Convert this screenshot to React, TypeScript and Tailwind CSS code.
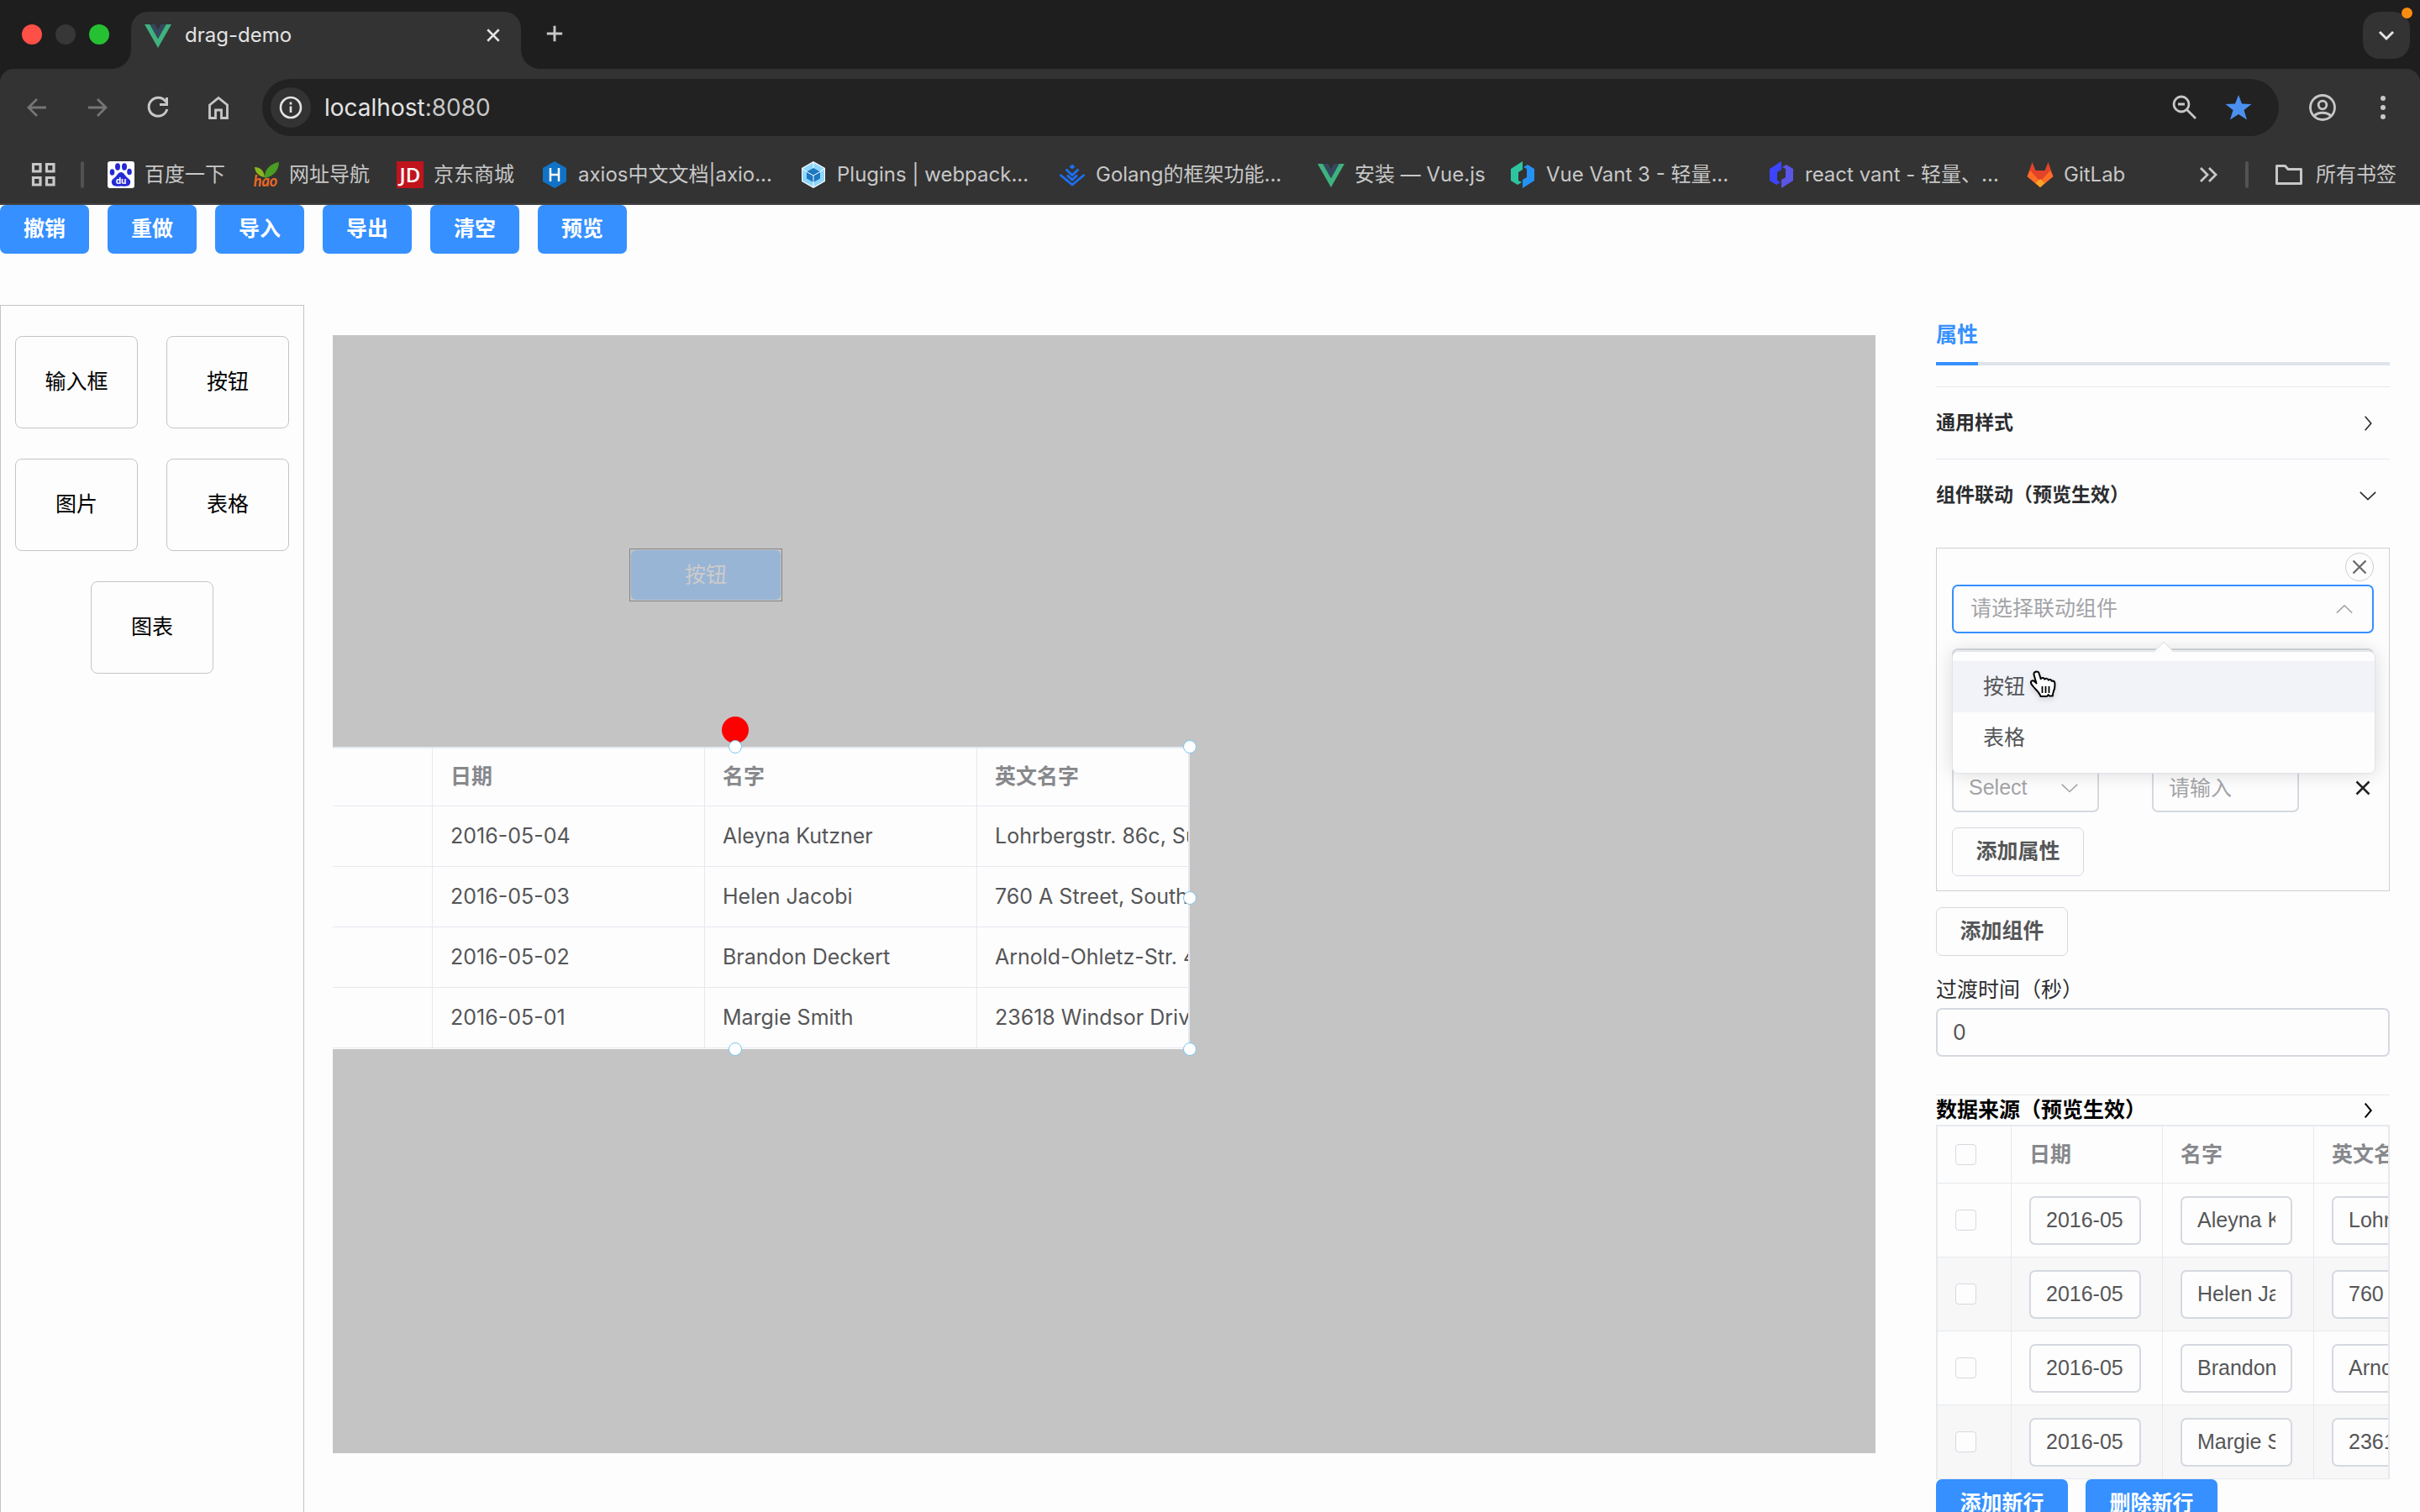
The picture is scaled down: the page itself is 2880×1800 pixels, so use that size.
import type { ReactNode } from "react";
import clsx from "clsx";

const bookmarks = [
  { name: "百度一下", icon: <BaiduIcon />, width: "w-24" },
  { name: "网址导航", icon: <HaoIcon />, width: "w-24" },
  { name: "京东商城", icon: <JdIcon />, width: "w-24" },
  { name: "axios中文文档|axio...", icon: <AxiosIcon />, width: "w-[232px]" },
  { name: "Plugins | webpack...", icon: <WebpackIcon />, width: "w-[232px]" },
  { name: "Golang的框架功能...", icon: <GolangIcon />, width: "w-[232px]" },
  { name: "安装 — Vue.js", icon: <VueIcon />, width: "w-[152px]" },
  { name: "Vue Vant 3 - 轻量...", icon: <VantIcon left="#2fc4a0" right="#2492f5" />, width: "w-[232px]" },
  { name: "react vant - 轻量、...", icon: <VantIcon left="#3d43ff" right="#5b55e8" />, width: "w-[232px]" },
  { name: "GitLab", icon: <GitlabIcon />, width: "w-20" },
];

const toolbar = ["撤销", "重做", "导入", "导出", "清空", "预览"];

const materials = ["输入框", "按钮", "图片", "表格", "图表"];

const rows = [
  { date: "2016-05-04", name: "Aleyna Kutzner", address: "Lohrbergstr. 86c, Süd Lilli" },
  { date: "2016-05-03", name: "Helen Jacobi", address: "760 A Street, South Frankfield" },
  { date: "2016-05-02", name: "Brandon Deckert", address: "Arnold-Ohletz-Str. 41a" },
  { date: "2016-05-01", name: "Margie Smith", address: "23618 Windsor Drive" },
];

const handles = [
  "left-1/2 top-0",
  "left-full top-0",
  "left-full top-1/2",
  "left-full top-full",
  "left-1/2 top-full",
  "left-0 top-0",
  "left-0 top-1/2",
  "left-0 top-full",
];

function VueIcon() {
  return (
    <svg viewBox="0 0 32 32" className="size-8">
      <path d="M0 3h6.4L16 20 25.600 3H32L16 31z" fill="#3fb27f" />
      <path d="M6.400 3h6L16 9.600 19.600 3h6L16 20z" fill="#35495e" />
    </svg>
  );
}

function BaiduIcon() {
  return (
    <svg viewBox="0 0 32 32" className="size-8">
      <rect width="32" height="32" rx="3" fill="#fff" />
      <g fill="#2429d6">
        <ellipse cx="12" cy="6.500" rx="3" ry="4.200" />
        <ellipse cx="20" cy="6.500" rx="3" ry="4.200" />
        <ellipse cx="5.500" cy="13" rx="2.800" ry="3.800" />
        <ellipse cx="26" cy="12.500" rx="2.800" ry="3.800" />
        <path d="M16 13c3 0 4 3 6.500 5.500S28 22 27 26s-5 4-11 3.500C10 30 6 30 5 26s2-5 4.500-7.500S13 13 16 13z" />
      </g>
      <text x="16" y="27" textAnchor="middle" fontSize="10" fontWeight="700" fontFamily="Inter, sans-serif" fill="#fff">
        du
      </text>
    </svg>
  );
}

function HaoIcon() {
  return (
    <svg viewBox="0 0 32 32" className="size-8">
      <path d="M32 1c0 9-6 17-17 19C14 12 20 3 32 1z" fill="#4a9c22" />
      <path d="M3 7c7 0 11 4 12 12C8 18 4 14 3 7z" fill="#8db51c" />
      <text x="16" y="30" textAnchor="middle" fontSize="18" fontStyle="italic" fontWeight="700" fontFamily="Lato, sans-serif" fill="#ec6a24">
        hao
      </text>
    </svg>
  );
}

function JdIcon() {
  return (
    <svg viewBox="0 0 32 32" className="size-8">
      <rect width="32" height="32" fill="#c1131c" />
      <text x="16" y="25" textAnchor="middle" fontSize="24" fontWeight="600" fontFamily="'Open Sans', sans-serif" fill="#fff">
        JD
      </text>
    </svg>
  );
}

function AxiosIcon() {
  return (
    <svg viewBox="0 0 32 32" className="size-8">
      <path d="M16 0l14 8v16l-14 8L2 24V8z" fill="#1173c7" />
      <path d="M11 8v16M21 8v16M11 16h10" stroke="#fff" strokeWidth="2.500" fill="none" />
    </svg>
  );
}

function WebpackIcon() {
  return (
    <svg viewBox="0 0 32 32" className="size-8">
      <path d="M16 0l14 8v16l-14 8L2 24V8z" fill="#fff" />
      <path d="M16 1.500l13 7.200v14.600l-13 7.200-13-7.200V8.700z" fill="#8ed6fb" />
      <path d="M16 8l8 4.500v8L16 25l-8-4.500v-8z" fill="#1c78c0" />
      <path d="M3 8.700l5 3.800M29 8.700l-5 3.800M16 25v6M8 12.500l8 4.500 8-4.500M16 17v8M16 2v6" stroke="#fff" strokeWidth="1" fill="none" />
    </svg>
  );
}

function GolangIcon() {
  return (
    <svg viewBox="0 0 32 32" className="size-8">
      <path d="M16 3.500l3.500 3-3.500 3-3.500-3z" fill="#1d6ff2" />
      <path d="M8.500 9.500L16 16.500l7.500-7M1.500 16L16 28l14.500-12M10 16.500l6 5.500 6-5.500" stroke="#1d6ff2" strokeWidth="2.800" fill="none" />
    </svg>
  );
}

function VantIcon({ left, right }: { left: string; right: string }) {
  return (
    <svg viewBox="0 0 32 32" className="size-8">
      <path d="M16 0v10l-5 3v10l4 2-5 3-8-5V9z" fill={left} />
      <path d="M16 32V22l5-3V9l-4-2 5-3 8 5v14z" fill={right} />
    </svg>
  );
}

function GitlabIcon() {
  return (
    <svg viewBox="0 0 32 32" className="size-8">
      <path d="M6.500 1l4 10h11l4-10L31.500 18 16 31 .5 18z" fill="#e24329" />
      <path d="M4 11L.5 18 16 31 31.500 18 28 11l-12 13z" fill="#fc6d26" />
      <path d="M16 31l-5.500-5 5.500-5 5.500 5z" fill="#fca326" />
    </svg>
  );
}

function Stroke({ d, size, width = 2, className }: { d: string; size: string; width?: number; className?: string }) {
  return (
    <svg viewBox="0 0 24 24" fill="none" stroke="currentColor" strokeWidth={width} className={clsx(size, "shrink-0", className)}>
      <path d={d} />
    </svg>
  );
}

const CHEVRON_RIGHT = "M8 2l8.500 10L8 22";
const CHEVRON_DOWN = "M1 7l11 10.500L23 7";
const CHEVRON_UP = "M1 17.500L12 7l11 10.500";
const CROSS = "M3 3l18 18M21 3L3 21";

function BrowserChrome() {
  return (
    <header className="shrink-0 bg-[#1e1e1e] font-['Inter','Noto_Sans_CJK_SC',sans-serif] text-[#c7c7c7]">
      <div className="flex h-[82px] items-end">
        <div className="flex h-[82px] w-[156px] shrink-0 items-center gap-4 pl-[26px]">
          <button aria-label="Close window" className="size-6 rounded-full bg-[#ff5047]" />
          <button aria-label="Minimize window" className="size-6 rounded-full bg-[#373737]" />
          <button aria-label="Zoom window" className="size-6 rounded-full bg-[#26c033]" />
        </div>
        <div className="relative flex h-[68px] w-[464px] shrink-0 items-center rounded-t-[20px] bg-[#333] pb-3 pl-4">
          <svg viewBox="0 0 24 24" className="absolute right-full bottom-0 size-6">
            <path d="M24 0v24H0C14 24 24 14 24 0z" fill="#333" />
          </svg>
          <svg viewBox="0 0 24 24" className="absolute bottom-0 left-full size-6">
            <path d="M0 0v24h24C10 24 0 14 0 0z" fill="#333" />
          </svg>
          <VueIcon />
          <span className="ml-4 text-2xl text-[#e3e3e3]">drag-demo</span>
          <button aria-label="Close tab" className="mr-6 ml-auto text-[#e3e3e3]">
            <Stroke d={CROSS} size="size-[18px]" width={3.4} />
          </button>
        </div>
        <button aria-label="New tab" className="mb-8 ml-[30px]">
          <Stroke d="M12 1v22M1 12h22" size="size-5" width={3.5} />
        </button>
        <button
          aria-label="Search tabs"
          className="relative mr-3 mb-3 ml-auto flex size-14 items-center justify-center rounded-[20px] bg-[#333] text-[#e3e3e3]"
        >
          <Stroke d="M4 8l8 8 8-8" size="size-6" width={3} />
          <span className="absolute -top-[5px] -right-[3px] size-[13px] rounded-full bg-[#f98d11]" />
        </button>
      </div>

      <div className="rounded-t-[16px] border-b-2 border-[#424242] bg-[#333]">
        <div className="flex h-[92px] items-center pr-7">
          <button aria-label="Back" className="ml-7 text-[#757575]">
            <Stroke d="M23 12H2M12 2L2 12l10 10" size="size-6" width={2.8} className="mx-1" />
          </button>
          <button aria-label="Forward" className="ml-10 text-[#757575]">
            <Stroke d="M1 12h21M12 2l10 10-10 10" size="size-6" width={2.8} className="mx-1" />
          </button>
          <button aria-label="Reload" className="ml-10">
            <svg viewBox="0 0 32 32" fill="none" stroke="currentColor" strokeWidth="3" className="size-8">
              <path d="M25.500 9.500A11 11 0 1 0 26.800 18M26.500 4v8.500H18" />
            </svg>
          </button>
          <button aria-label="Home" className="ml-10">
            <svg viewBox="0 0 32 32" fill="none" stroke="currentColor" strokeWidth="2.800" className="size-8">
              <path d="M5.500 13L16 4.500 26.500 13v15.500h-7V19h-7v9.500h-7z" />
            </svg>
          </button>
          <div className="ml-9 flex h-[68px] grow items-center rounded-full bg-[#222] pr-8 pl-[10px]">
            <button aria-label="Site information" className="flex size-12 items-center justify-center rounded-full bg-[#333] text-[#e3e3e3]">
              <svg viewBox="0 0 28 28" fill="none" stroke="currentColor" strokeWidth="2.600" className="size-7">
                <circle cx="14" cy="14" r="12" />
                <path d="M14 12.500v7.500M14 7.500v3" />
              </svg>
            </button>
            <p className="ml-4 text-[28px] text-[#c7c7c7]">
              <span className="text-[#e3e3e3]">localhost</span>:8080
            </p>
            <button aria-label="Zoom out" className="ml-auto">
              <svg viewBox="0 0 32 32" fill="none" stroke="currentColor" strokeWidth="2.800" className="size-8">
                <circle cx="12" cy="12" r="9" />
                <path d="M18.500 18.500L29 29M8 12h8" />
              </svg>
            </button>
            <button aria-label="Edit bookmark" className="ml-8 text-[#4a90f0]">
              <svg viewBox="0 0 32 32" fill="currentColor" className="size-8">
                <path d="M16 1l4 10.500 11.500.5-9 7 3.500 11.500L16 24 6 30.500 9.500 19l-9-7L12 11.500z" />
              </svg>
            </button>
          </div>
          <button aria-label="Profile" className="ml-9">
            <svg viewBox="0 0 32 32" fill="none" stroke="currentColor" strokeWidth="2.800" className="size-8">
              <circle cx="16" cy="16" r="14.500" />
              <circle cx="16" cy="13" r="4.800" />
              <path d="M6 26c5-5 15-5 20 0" />
            </svg>
          </button>
          <button aria-label="Menu" className="ml-10">
            <svg viewBox="0 0 32 32" fill="currentColor" className="size-8">
              <circle cx="16" cy="5" r="3" />
              <circle cx="16" cy="16" r="3" />
              <circle cx="16" cy="27" r="3" />
            </svg>
          </button>
        </div>

        <nav className="flex h-[68px] items-center pr-7 pl-9 text-2xl">
          <button aria-label="Apps">
            <svg viewBox="0 0 32 32" fill="none" stroke="currentColor" strokeWidth="3.200" className="size-8">
              <path d="M3.500 3.500h8.500V12H3.500zM19.500 3.500H28V12h-8.500zM3.500 19.500h8.500V28H3.500zM19.500 19.500H28V28h-8.500z" />
            </svg>
          </button>
          <span className="mr-7 ml-7 h-8 w-1 shrink-0 rounded-full bg-[#525252]" />
          <div className="flex gap-8">
            {bookmarks.map((item) => (
              <a key={item.name} href="#" className="flex shrink-0 items-center gap-3 whitespace-nowrap">
                {item.icon}
                <span className={item.width}>{item.name}</span>
              </a>
            ))}
          </div>
          <button aria-label="More bookmarks" className="ml-auto">
            <Stroke d="M3 4l8 8-8 8M13 4l8 8-8 8" size="size-6" width={2.8} />
          </button>
          <span className="mr-8 ml-8 h-8 w-1 shrink-0 rounded-full bg-[#525252]" />
          <a href="#" className="flex shrink-0 items-center gap-4">
            <svg viewBox="0 0 32 32" fill="none" stroke="currentColor" strokeWidth="3" className="size-8">
              <path d="M1.500 5.500h10l3.500 4h15.500v17h-29z" strokeLinejoin="round" />
            </svg>
            所有书签
          </a>
        </nav>
      </div>
    </header>
  );
}

function PrimaryButton({ children, className }: { children: ReactNode; className?: string }) {
  return (
    <button className={clsx("h-[58px] rounded-[7px] bg-[#3690ff] text-[25px] font-bold text-white", className)}>
      {children}
    </button>
  );
}

function PlainButton({ children }: { children: ReactNode }) {
  return (
    <button className="block h-[58px] w-[157px] rounded-[7px] border border-[#d5d9e0] text-[25px] font-bold text-[#555658]">
      {children}
    </button>
  );
}

function MaterialPanel() {
  return (
    <aside className="flex w-[362px] shrink-0 flex-wrap content-start justify-center gap-x-[34px] gap-y-9 border border-b-0 border-[#c4c4c4] pt-9">
      {materials.map((name) => (
        <button key={name} className="h-[110px] w-[146px] rounded-[8px] border border-[#c4c4c4] text-[25px] text-black">
          {name}
        </button>
      ))}
    </aside>
  );
}

function Stage() {
  return (
    <section className="relative mt-9 mr-[72px] mb-[70px] ml-[34px] grow overflow-hidden bg-[#c4c4c4]">
      {/* widgets sit freely on the stage */}
      <div className="absolute top-[254px] left-[353px] border border-[#858585] p-px">
        <button className="block h-[59px] w-[178px] rounded-[6px] bg-[#98b5d6] text-[25px] text-[#cdcbca]">按钮</button>
      </div>

      <div className="absolute top-[490px] -left-[62px] h-[360px] w-[1082px]">
        <span className="absolute -top-9 left-1/2 size-8 -translate-x-1/2 rounded-full bg-[#f00]" />
        <div className="h-full overflow-hidden border-t-2 border-r-2 border-[#e6e9f0] bg-[#fdfdfd]">
          <table className="w-[1153px] table-fixed border-separate border-spacing-0 text-left text-[25px] text-[#555658]">
            <colgroup>
              <col className="w-[181px]" />
              <col className="w-[324px]" />
              <col className="w-[324px]" />
              <col className="w-[324px]" />
            </colgroup>
            <thead className="text-[#87888c]">
              <tr className="h-[69px]">
                {["", "日期", "名字", "英文名字"].map((title, index) => (
                  <th key={index} className="border-r border-b border-[#e6e9f0] px-[21px] font-bold">
                    {title}
                  </th>
                ))}
              </tr>
            </thead>
            <tbody className="whitespace-nowrap">
              {rows.map((row) => (
                <tr key={row.date} className="h-[72px]">
                  <td className="border-r border-b border-[#e6e9f0]" />
                  <td className="border-r border-b border-[#e6e9f0] px-[21px]">{row.date}</td>
                  <td className="border-r border-b border-[#e6e9f0] px-[21px]">{row.name}</td>
                  <td className="overflow-hidden border-r border-b border-[#e6e9f0] px-[21px]">{row.address}</td>
                </tr>
              ))}
            </tbody>
          </table>
        </div>
        {handles.map((place) => (
          <span
            key={place}
            className={clsx("absolute size-4 -translate-x-1/2 -translate-y-1/2 rounded-full border border-[#7cc6ef] bg-white", place)}
          />
        ))}
      </div>
    </section>
  );
}

function HandCursor() {
  return (
    <svg viewBox="0 0 32 34" className="absolute top-[22px] left-[91px] h-[34px] w-8 drop-shadow-md">
      <path
        d="M7.500 1.800c2.200-.8 3.800.4 4.300 2.200l1.900 6.200c.6-1.800 4.200-1.600 4.600.6.9-1.600 4-1.200 4.500.9 1-1.300 3.500-.8 4 1.200 1-.9 3.200-.2 3.500 1.900.5 4 .2 7-1.400 10.200-.6 1.500-.9 3-1 5.500h-4.200l-1-1.500-1.600 2h-7.600c-1.500-5-5.500-7.500-9-12-1.500-1.600-3.500-4.500-2-6s3.500-.7 6 2.500L5.600 5.500c-.5-1.700.3-3.100 1.900-3.700z"
        fill="#fff"
        stroke="#000"
        strokeWidth="2"
        strokeLinejoin="round"
      />
      <path d="M15.500 19v8M19.500 19v8M23.500 19v8" stroke="#000" strokeWidth="1.800" />
    </svg>
  );
}

function LinkedSelect() {
  return (
    <div className="relative mt-1">
      <select
        aria-label="联动组件"
        className="h-[58px] w-full appearance-none rounded-[7px] border-2 border-[#3690ff] px-5 text-[25px] text-[#a3a4a8]"
      >
        <option>请选择联动组件</option>
      </select>
      <Stroke d={CHEVRON_UP} size="size-5" width={1.8} className="absolute top-[19px] right-[25px] text-[#a3a4a8]" />

      <div className="absolute top-[79px] -right-[2px] left-0 z-10 rounded-[7px] border border-[#e0e3ea] bg-[#fdfdfd] pt-[11px] pb-[11px] shadow-[0_0_22px_rgba(0,0,0,0.14)]">
        <span className="absolute -top-[9px] left-1/2 size-4 -translate-x-1/2 rotate-45 border-t border-l border-[#e0e3ea] bg-[#fdfdfd]" />
        <ul role="listbox" aria-label="联动组件选项" className="relative text-[25px] leading-[61px] text-[#555658]">
          <li role="option" aria-selected="false" className="bg-[#f1f3f8] px-9">
            按钮
          </li>
          <li role="option" aria-selected="false" className="px-9">
            表格
          </li>
        </ul>
        <HandCursor />
      </div>
    </div>
  );
}

function LinkagePanel() {
  return (
    <div className="mt-5 border border-[#d0d0d0] px-[18px] pt-[5px] pb-[17px]">
      <button aria-label="删除组件" className="ml-auto flex size-[34px] items-center justify-center rounded-full border border-[#cfcfcf] text-[#6b6b6b]">
        <Stroke d={CROSS} size="size-5" width={2.8} />
      </button>
      <LinkedSelect />
      <select aria-label="联动方式" className="mt-[18px] block h-[58px] w-full appearance-none rounded-[7px] border-2 border-[#d5d9e0]" />
      <div className="mt-[79px] flex items-center font-['Liberation_Sans','Noto_Sans_CJK_SC',sans-serif] text-[25px]">
        <div className="relative w-[175px]">
          <select aria-label="属性名" className="block h-[58px] w-full appearance-none rounded-[7px] border-2 border-[#d5d9e0] px-[18px] text-[#a3a4a8]">
            <option>Select</option>
          </select>
          <Stroke d={CHEVRON_DOWN} size="size-5" width={1.8} className="absolute top-[19px] right-[25px] text-[#a3a4a8]" />
        </div>
        <input
          aria-label="属性值"
          placeholder="请输入"
          className="ml-[63px] h-[58px] w-[175px] rounded-[7px] border-2 border-[#d5d9e0] px-[18px] placeholder:text-[#a3a4a8]"
        />
        <button aria-label="删除属性" className="mr-[3px] ml-auto text-[#222]">
          <Stroke d={CROSS} size="size-5" width={3} />
        </button>
      </div>
      <div className="mt-[18px]">
        <PlainButton>添加属性</PlainButton>
      </div>
    </div>
  );
}

function DataTable() {
  const cell = "border-r border-b border-[#e6e9ed] px-[21px]";
  const box = "block size-[25px] appearance-none rounded-[4px] border border-[#d5d9e0] bg-[#fdfdfd]";
  const field = "block h-[58px] w-[133px] rounded-[7px] border-2 border-[#d5d9e0] bg-[#fdfdfd] px-[18px] text-[#555658]";
  return (
    <div className="overflow-hidden border-x-2 border-t-2 border-[#e6e9ed]">
      <table className="w-[628px] table-fixed border-separate border-spacing-0 text-left text-[25px]">
        <colgroup>
          <col className="w-[88px]" />
          <col className="w-[180px]" />
          <col className="w-[180px]" />
          <col className="w-[180px]" />
        </colgroup>
        <thead className="text-[#87888c]">
          <tr className="h-[68px]">
            <th className={cell}>
              <input type="checkbox" aria-label="全选" className={box} />
            </th>
            <th className={cell}>日期</th>
            <th className={cell}>名字</th>
            <th className={cell}>英文名字</th>
          </tr>
        </thead>
        <tbody className="font-['Liberation_Sans','Noto_Sans_CJK_SC',sans-serif]">
          {rows.map((row) => (
            <tr key={row.date} className="h-[88px] even:bg-[#f7f7f8]">
              <td className={cell}>
                <input type="checkbox" aria-label={row.date} className={box} />
              </td>
              {[row.date, row.name, row.address].map((value) => (
                <td key={value} className={cell}>
                  <input aria-label={value} defaultValue={value} className={field} />
                </td>
              ))}
            </tr>
          ))}
        </tbody>
      </table>
    </div>
  );
}

function PropertyPanel() {
  return (
    <aside className="mr-9 w-[540px] shrink-0 text-[25px]">
      <div role="tablist" className="flex h-[72px] border-b-4 border-[#dfe3ea]">
        <button role="tab" aria-selected="true" className="h-[72px] border-b-4 border-[#3690ff] pt-1 font-bold text-[#3690ff]">
          属性
        </button>
      </div>

      <button className="mt-[25px] flex h-[86px] w-full items-center justify-between border-t border-[#e6e9f0] pr-4 text-[23px] font-bold text-[#2c2d30]">
        通用样式
        <Stroke d={CHEVRON_RIGHT} size="size-5" width={2} />
      </button>
      <button className="flex h-[86px] w-full items-center justify-between border-t border-[#e6e9f0] pr-4 text-[23px] font-bold text-[#2c2d30]">
        组件联动（预览生效）
        <Stroke d={CHEVRON_DOWN} size="size-5" width={2} />
      </button>

      <LinkagePanel />
      <div className="mt-[19px]">
        <PlainButton>添加组件</PlainButton>
      </div>
      <label htmlFor="duration" className="mt-5 block leading-10 text-[#2c2d30]">
        过渡时间（秒）
      </label>
      <input
        id="duration"
        defaultValue="0"
        className="mt-[2px] block h-[58px] w-full rounded-[7px] border-2 border-[#d5d9e0] px-[18px] text-[#555658]"
      />

      <button className="mt-[45px] flex h-9 w-full items-center justify-between border-t border-[#e6e9ed] pr-4 font-bold text-black">
        数据来源（预览生效）
        <Stroke d={CHEVRON_RIGHT} size="size-5" width={2.4} />
      </button>
      <DataTable />
      <div className="flex gap-[21px]">
        <PrimaryButton className="w-[157px]">添加新行</PrimaryButton>
        <PrimaryButton className="w-[157px]">删除新行</PrimaryButton>
      </div>
    </aside>
  );
}

export default function App() {
  return (
    <div className="flex h-screen flex-col overflow-hidden bg-[#fdfdfd] font-['Inter','Noto_Sans_CJK_SC',sans-serif]">
      <BrowserChrome />
      <div className="flex shrink-0 gap-[22px]">
        {toolbar.map((name) => (
          <PrimaryButton key={name} className="w-[106px]">
            {name}
          </PrimaryButton>
        ))}
      </div>
      <main className="mt-[61px] flex min-h-0 grow">
        <MaterialPanel />
        <Stage />
        <PropertyPanel />
      </main>
    </div>
  );
}
